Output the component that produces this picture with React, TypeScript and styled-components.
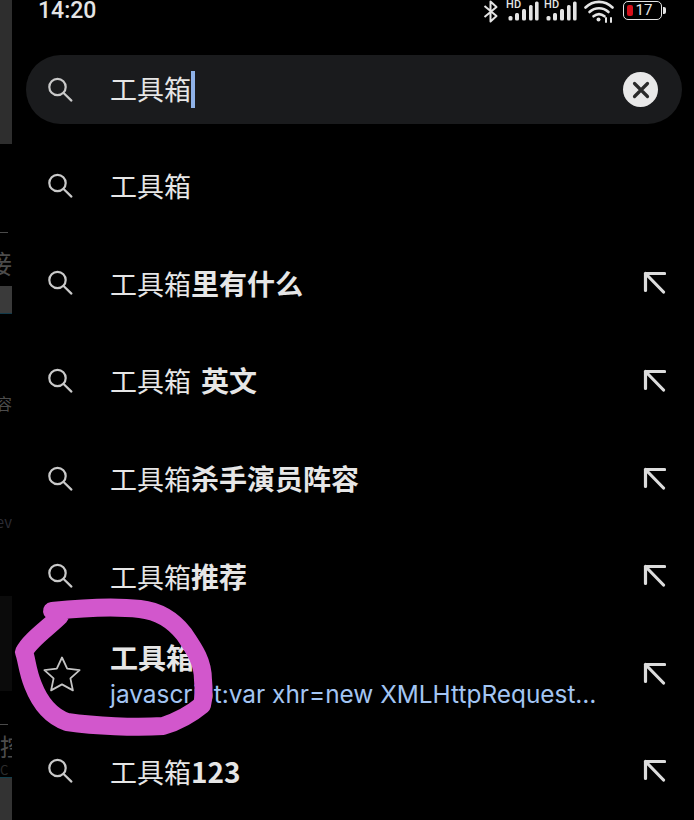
import React from 'react';
import styled, { createGlobalStyle } from 'styled-components';

const CJK = '"Noto Sans CJK SC", "Noto Sans", sans-serif';

const GlobalStyle = createGlobalStyle`
  html, body {
    margin: 0;
    padding: 0;
    background: #000;
  }
`;

type Part = { text: string; bold?: boolean };
type Suggestion = { parts: Part[]; arrow?: boolean; bookmark?: boolean; url?: string };

const suggestions: Suggestion[] = [
  { parts: [{ text: '工具箱' }] },
  { parts: [{ text: '工具箱' }, { text: '里有什么', bold: true }], arrow: true },
  { parts: [{ text: '工具箱 ' }, { text: '英文', bold: true }], arrow: true },
  { parts: [{ text: '工具箱' }, { text: '杀手演员阵容', bold: true }], arrow: true },
  { parts: [{ text: '工具箱' }, { text: '推荐', bold: true }], arrow: true },
  {
    parts: [{ text: '工具箱', bold: true }],
    arrow: true,
    bookmark: true,
    url: 'javascript:var xhr=new XMLHttpRequest…',
  },
  { parts: [{ text: '工具箱' }, { text: '123', bold: true }], arrow: true },
];

const SearchIcon = () => (
  <svg width="28" height="28" viewBox="0 0 28 28" fill="none" stroke="#c9c9c9" strokeWidth="2.2">
    <circle cx="10.5" cy="11" r="8.2" />
    <path d="M16.6 17 L24.4 24.6" strokeLinecap="round" />
  </svg>
);

const ArrowIcon = () => (
  <svg width="26" height="26" viewBox="0 0 26 26" fill="none" stroke="#dcdcdc" strokeWidth="3.2">
    <path d="M5.5 20.5 V3.5 H24.5 M5.5 3.5 L23.5 22" strokeLinecap="round" strokeLinejoin="round" />
  </svg>
);

const StarIcon = () => (
  <svg width="40" height="38" viewBox="0 0 40 38" fill="none" stroke="#c4c4c4" strokeWidth="1.8" strokeLinejoin="round">
    <path d="M20 2.5 L25.2 13.6 L37.6 15.1 L28.4 23.4 L30.9 35.4 L20 29.4 L9.1 35.4 L11.6 23.4 L2.4 15.1 L14.8 13.6 Z" />
  </svg>
);

const SignalIcon = () => (
  <svg width="31" height="21" viewBox="0 0 31 21" fill="#e4e4e4">
    <rect x="0.5" y="16" width="4" height="4.5" rx="1.5" />
    <rect x="7" y="13" width="4" height="7.5" rx="1.5" />
    <rect x="14" y="9" width="4" height="11.5" rx="1.5" />
    <rect x="21" y="5" width="3.6" height="15.5" rx="1.5" />
    <rect x="27" y="1.5" width="3.6" height="19" rx="1.5" />
  </svg>
);

const App: React.FC = () => {
  return (
    <Page>
      <GlobalStyle />
      <Strip>
        <StripBlock $height={144} $color="#2e2e2e" />
        <StripGap $height={78} />
        <StripDash $height={20} />
        <StripGlyph $height={42} $size={26}>接</StripGlyph>
        <StripGap $height={2} />
        <StripBlock $height={28} $color="#3a3a3a" $line />
        <StripGap $height={78} />
        <StripGlyph $height={22} $size={16}>容</StripGlyph>
        <StripGap $height={96} />
        <StripGlyph $height={22} $size={15} $color="#2c2c34">ev</StripGlyph>
        <StripGap $height={64} />
        <StripBlock $height={95} $color="#0b0b0b" />
        <StripGap $height={25} />
        <StripDash $height={16} />
        <StripGlyph $height={28} $size={24} $left>控</StripGlyph>
        <StripGap $height={2} />
        <StripGlyph $height={15} $size={13} $color="#2c2c2c" $left>C</StripGlyph>
        <StripBlock $height={43} $color="#333" $topLine />
      </Strip>

      <Main>
        <StatusBar>
          <Clock>14:20</Clock>
          <StatusIcons>
            <BluetoothSlot>
              <svg width="16" height="23" viewBox="0 0 16 23" fill="none" stroke="#e4e4e4" strokeWidth="2">
                <path d="M1.5 6 L13.5 16 L7.5 21.5 V1.5 L13.5 7 L1.5 17" strokeLinejoin="round" />
              </svg>
            </BluetoothSlot>
            <SimGroup>
              <HdLabel>HD</HdLabel>
              <SignalIcon />
            </SimGroup>
            <SimGroup>
              <HdLabel>HD</HdLabel>
              <SignalIcon />
            </SimGroup>
            <svg width="30" height="23" viewBox="0 0 30 23" fill="none" stroke="#e4e4e4" strokeWidth="2.6" strokeLinecap="round">
              <path d="M1.5 7.5 C9 0 21 0 28.5 7.5" />
              <path d="M5.5 12 C11 7 19 7 24.5 12" />
              <path d="M9.5 16.3 C13 13.5 17 13.5 20.5 16.3" />
              <circle cx="14.5" cy="19.5" r="2" fill="#e4e4e4" stroke="none" />
              <path d="M22 22 V18 M27 22 V18" strokeWidth="2" />
            </svg>
            <Battery>
              <BatteryBody>
                <BatteryLevel />
                <BatteryText>17</BatteryText>
              </BatteryBody>
              <BatteryCap />
            </Battery>
          </StatusIcons>
        </StatusBar>

        <SearchPill>
          <PillIcon>
            <SearchIcon />
          </PillIcon>
          <QueryText>工具箱</QueryText>
          <Caret />
          <ClearButton>
            <svg width="20" height="20" viewBox="0 0 20 20" fill="none" stroke="#2a2a2a" strokeWidth="3.2" strokeLinecap="round">
              <path d="M3.5 3.5 L16.5 16.5 M16.5 3.5 L3.5 16.5" />
            </svg>
          </ClearButton>
        </SearchPill>

        <List>
          {suggestions.map((item, i) => (
            <Row key={i}>
              <RowIcon $star={item.bookmark}>{item.bookmark ? <StarIcon /> : <SearchIcon />}</RowIcon>
              <RowBody>
                <RowTitle>
                  {item.parts.map((part, j) => (
                    <TitlePart key={j} $bold={part.bold}>
                      {part.text}
                    </TitlePart>
                  ))}
                </RowTitle>
                {item.url && <RowUrl>{item.url}</RowUrl>}
              </RowBody>
              {item.arrow && <ArrowIcon />}
            </Row>
          ))}
        </List>
      </Main>

      <Scribble width="694" height="820" viewBox="0 0 694 820" fill="none">
        <path
          d="M52 611 C80 608 115 606 140 609 C158 611 173 620 184 634 C195 650 203 662 203 680 C204 690 204 697 202 705 C190 715 176 722 163 726 C135 728 95 726 67 722 C50 716 40 703 33 685 C27 670 27 660 24 652 C30 640 48 628 60 616"
          stroke="#d257cc"
          strokeWidth="18"
          strokeLinecap="round"
          strokeLinejoin="round"
        />
      </Scribble>
    </Page>
  );
};

const Page = styled.div`
  position: relative;
  display: flex;
  width: 694px;
  height: 820px;
  overflow: hidden;
  background: #000;
`;

const Strip = styled.div`
  display: flex;
  flex-direction: column;
  flex: 0 0 12px;
  width: 12px;
  overflow: hidden;
`;

const StripBlock = styled.div<{ $height: number; $color: string; $line?: boolean; $topLine?: boolean }>`
  flex: 0 0 ${({ $height }) => $height}px;
  box-sizing: border-box;
  background: ${({ $color }) => $color};
  border-bottom: ${({ $line }) => ($line ? '1px solid #123a4a' : 'none')};
  border-top: ${({ $topLine }) => ($topLine ? '1px solid #12404e' : 'none')};
`;

const StripGap = styled.div<{ $height: number }>`
  flex: 0 0 ${({ $height }) => $height}px;
`;

const StripDash = styled.div<{ $height: number }>`
  flex: 0 0 ${({ $height }) => $height}px;
  display: flex;
  align-items: center;

  &::before {
    content: '';
    width: 8px;
    height: 1px;
    background: #4a4a4a;
  }
`;

const StripGlyph = styled.div<{ $height: number; $size: number; $color?: string; $left?: boolean }>`
  flex: 0 0 ${({ $height }) => $height}px;
  display: flex;
  align-items: center;
  justify-content: ${({ $left }) => ($left ? 'flex-start' : 'flex-end')};
  overflow: hidden;
  font-family: ${CJK};
  font-size: ${({ $size }) => $size}px;
  line-height: 1;
  white-space: nowrap;
  color: ${({ $color }) => $color ?? '#4c4c4c'};
`;

const Main = styled.div`
  display: flex;
  flex-direction: column;
  flex: 1;
  min-width: 0;
`;

const StatusBar = styled.div`
  display: flex;
  align-items: flex-start;
  justify-content: space-between;
  flex: 0 0 55px;
  padding: 0 28px 0 26px;
  box-sizing: border-box;
`;

const Clock = styled.span`
  font-family: Roboto, sans-serif;
  font-size: 23px;
  font-weight: 500;
  line-height: 22px;
  color: #e4e4e4;
`;

const StatusIcons = styled.div`
  display: flex;
  align-items: flex-start;
  gap: 7px;
`;

const BluetoothSlot = styled.div`
  display: flex;
  margin-right: 2px;
`;

const SimGroup = styled.div`
  position: relative;
  width: 31px;
  height: 21px;
`;

const HdLabel = styled.span`
  position: absolute;
  left: -2px;
  top: 0;
  font-family: Roboto, sans-serif;
  font-size: 11px;
  font-weight: 500;
  line-height: 9px;
  letter-spacing: 0.3px;
  color: #e4e4e4;
`;

const Battery = styled.div`
  display: flex;
  align-items: center;
  gap: 1px;
  margin-left: 2px;
  height: 21px;
`;

const BatteryBody = styled.div`
  display: flex;
  align-items: center;
  box-sizing: border-box;
  width: 39px;
  height: 19px;
  padding: 0 2.5px;
  gap: 3px;
  border: 1.5px solid #e4e4e4;
  border-radius: 5px;
`;

const BatteryLevel = styled.div`
  width: 6px;
  height: 11px;
  border-radius: 2px;
  background: #d6101b;
`;

const BatteryText = styled.span`
  font-family: Roboto, sans-serif;
  font-size: 15px;
  line-height: 1;
  color: #e4e4e4;
`;

const BatteryCap = styled.div`
  width: 3px;
  height: 7px;
  border-radius: 0 2px 2px 0;
  background: #e4e4e4;
`;

const SearchPill = styled.div`
  display: flex;
  align-items: center;
  flex: 0 0 69px;
  margin: 0 12px 0 14px;
  padding: 0 24px 0 21px;
  border-radius: 35px;
  background: #1a1b1d;
`;

const PillIcon = styled.div`
  display: flex;
  width: 63px;
`;

const QueryText = styled.span`
  font-family: ${CJK};
  font-size: 27px;
  line-height: 1;
  margin-bottom: 3px;
  color: #e6e6e6;
`;

const Caret = styled.div`
  width: 4px;
  height: 37px;
  background: #8fb2e8;
`;

const ClearButton = styled.div`
  display: flex;
  align-items: center;
  justify-content: center;
  width: 35px;
  height: 35px;
  margin-left: auto;
  border-radius: 50%;
  background: #e8e8e8;
`;

const List = styled.div`
  display: flex;
  flex-direction: column;
  flex: none;
  margin-top: 13px;
`;

const Row = styled.div`
  display: flex;
  align-items: center;
  flex: none;
  height: 97.6px;
  padding: 0 28px 0 35px;
`;

const RowIcon = styled.div<{ $star?: boolean }>`
  display: flex;
  flex: 0 0 ${({ $star }) => ($star ? '68px' : '63px')};
  margin-left: ${({ $star }) => ($star ? '-5px' : '0')};
`;

const RowBody = styled.div`
  display: flex;
  flex-direction: column;
  flex: 1;
  min-width: 0;
`;

const RowTitle = styled.div`
  font-family: ${CJK};
  font-size: 27px;
  line-height: 36px;
  white-space: pre;
  word-spacing: 4px;
  color: #e6e6e6;
`;

const TitlePart = styled.span<{ $bold?: boolean }>`
  font-weight: ${({ $bold }) => ($bold ? 700 : 400)};
  font-size: ${({ $bold }) => ($bold ? '28px' : '27px')};
`;

const RowUrl = styled.div`
  margin-top: 3px;
  font-family: Inter, "Noto Sans", sans-serif;
  font-size: 24.4px;
  line-height: 30px;
  white-space: nowrap;
  color: #a3c5f3;
`;

const Scribble = styled.svg`
  position: absolute;
  left: 0;
  top: 0;
  pointer-events: none;
`;

export default App;
